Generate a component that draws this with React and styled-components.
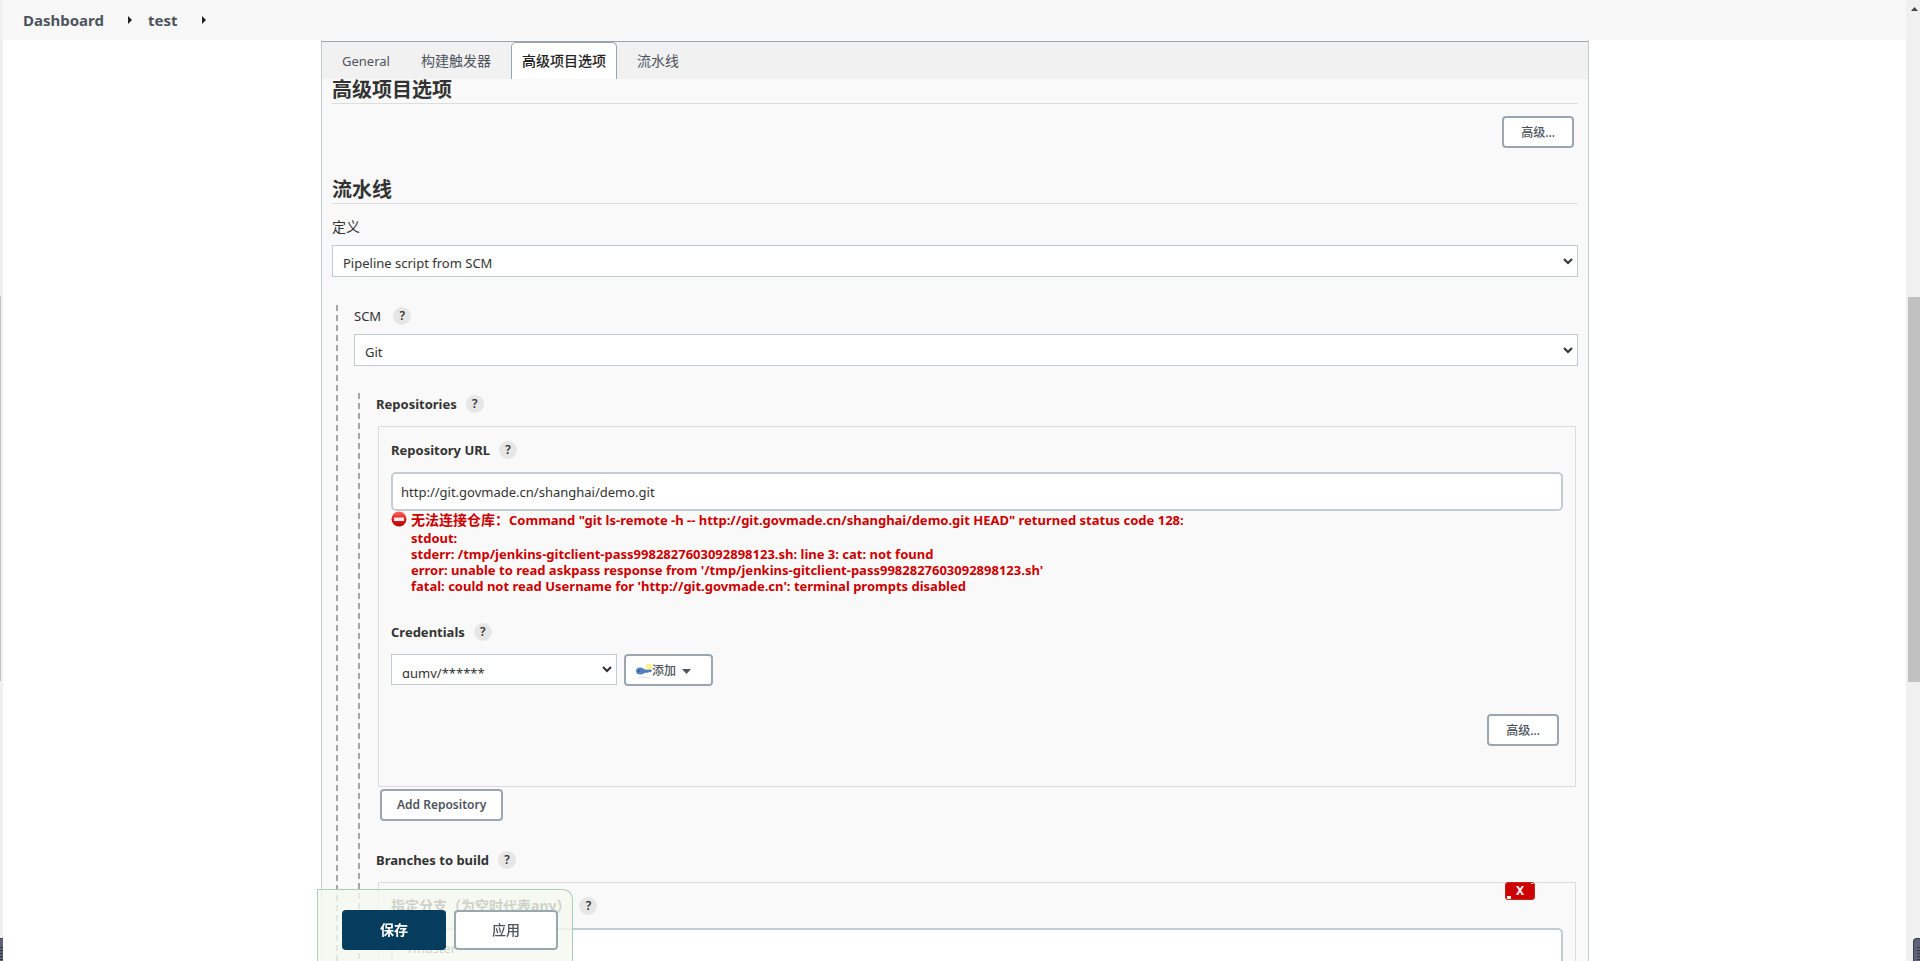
import React, { useState } from "react";
import styled, { createGlobalStyle } from "styled-components";

const GlobalStyle = createGlobalStyle`
  * { box-sizing: border-box; }

  body {
    margin: 0;
    background: #fff;
    color: #333;
    font-family: "Noto Sans", "Noto Sans CJK SC", sans-serif;
    font-size: 13px;
    line-height: 20px;
    overflow: hidden;
  }

  button, input, select { font: inherit; color: inherit; margin: 0; }
`;

// --- PAGE FRAME ---
const Page = styled.div`
  height: 100vh;
  display: flex;
  overflow: hidden;
`;

const LeftEdge = styled.div`
  flex: none;
  width: 3px;
  display: flex;
  flex-direction: column;
  background: #f0f0f0;
`;

const LeftThumb = styled.div`
  width: 1px;
  margin-top: calc(30vh + 8px);
  height: 40vh;
  background: #c1c1c1;
`;

const Corner = styled.div`
  margin-top: auto;
  align-self: flex-end;
  width: ${(props) => props.$width};
  height: 23px;
  background:
    repeating-linear-gradient(#5f6377 0 2px, #343849 2px 3px) right 6px / 3px 100% no-repeat,
    #5f6377;
  border: 1px solid #3a3d4c;
  border-width: 1px 0 0 ${(props) => (props.$rounded ? "1px" : "0")};
  border-radius: ${(props) => (props.$rounded ? "4px 0 0 0" : "0")};
`;

const Scrollbar = styled.div`
  flex: none;
  width: 14px;
  display: flex;
  flex-direction: column;
  background: #f0f0f0;

  svg { display: block; margin: 7px 0 0 5px; }
`;

const Thumb = styled.div`
  margin: calc(30vh - 2px) 0 0 2px;
  height: 40vh;
  background: #c1c1c1;
`;

const Main = styled.div`
  flex: 1;
  min-width: 0;
  height: 100vh;
  display: flex;
  flex-direction: column;
  overflow: hidden;
`;

const Breadcrumbs = styled.nav`
  flex: none;
  height: 40px;
  display: flex;
  align-items: center;
  padding-left: 20px;
  background: #f8f8f8;
  font-size: 15px;
  font-weight: 700;

  a { color: #4d545d; text-decoration: none; }
  svg { margin: 0 16px 0 24px; }
`;

// --- CONFIG PANEL ---
const Panel = styled.main`
  flex: 1;
  min-height: 0;
  margin: 0 317px 0 318px;
  background: #f9f9f9;
  border: solid #c0cace;
  border-width: 0 1px;
  overflow: hidden;

  @media (max-width: 1400px) { margin: 0 16px; }
`;

const TabBar = styled.div`
  height: 38px;
  margin-top: 1px;
  display: flex;
  gap: 9px;
  padding-left: 9px;
  background: #f1f1f1;
  border-top: 1px solid #98a4ae;
`;

const Tab = styled.button`
  padding: 0 10px;
  border: 1px solid ${(props) => (props.$active ? "#98a4ae" : "transparent")};
  border-bottom: 0;
  border-radius: 5px 5px 0 0;
  background: ${(props) => (props.$active ? "#fff" : "transparent")};
  color: ${(props) => (props.$active ? "#222" : "#4d545d")};
  font-size: ${(props) => (props.$latin ? "13px" : "14px")};
  font-weight: ${(props) => (props.$active ? 500 : 400)};
  cursor: pointer;
`;

const Form = styled.form`
  padding: 0 10px;
`;

const SectionTitle = styled.h2`
  margin: 0;
  height: 25px;
  border-bottom: 1px solid #ddd;
  font-size: 20px;
  line-height: 22px;
  font-weight: 700;
`;

const AdvancedRow = styled.div`
  display: flex;
  justify-content: flex-end;
  padding: ${(props) => (props.$nested ? "28px 4px 40px" : "12px 4px 31px")};
`;

const SmallButton = styled.button`
  height: 32px;
  display: inline-flex;
  align-items: center;
  gap: 6px;
  padding: ${(props) => (props.$icon ? "2px 20px 0 10px" : props.$bold ? "0 15px" : "2px 17px 0")};
  border: 2px solid #9aa7b1;
  border-radius: 4px;
  background: #fff;
  color: #4d545d;
  font-size: 12px;
  font-weight: ${(props) => (props.$bold ? 600 : 500)};
  cursor: pointer;

  span { display: inline-flex; align-items: center; }
`;

const LabelRow = styled.div`
  display: flex;
  align-items: center;
  gap: ${(props) => (props.$wide ? "12px" : "9px")};
  height: 22px;
  font-size: ${(props) => (props.$cjk ? "14px" : "13px")};
  font-weight: ${(props) => (props.$bold ? 700 : 400)};
`;

const Help = styled.a`
  width: 18px;
  height: 18px;
  border-radius: 50%;
  background: #e6e6e6;
  color: #333;
  font-size: 12px;
  line-height: 18px;
  font-weight: 600;
  text-align: center;
  text-decoration: none;
`;

const SelectWrap = styled.div`
  display: grid;
  align-items: center;
  width: ${(props) => (props.$small ? "226px" : "100%")};

  > * { grid-area: 1 / 1; }
  > svg { justify-self: end; margin-right: 5px; pointer-events: none; }
`;

const Select = styled.select`
  appearance: none;
  width: 100%;
  height: ${(props) => (props.$clipped ? "31px" : "32px")};
  padding: ${(props) => (props.$clipped ? "8px 10px 6px" : "4px 10px 0")};
  border: 1px solid #c0cace;
  border-radius: 0;
  background: #fff;
`;

const TextInput = styled.input`
  display: block;
  width: 100%;
  height: 39px;
  padding: 0 8px;
  border: 2px solid #c3cdd1;
  border-radius: 5px;
  background: #fff;
`;

const Nested = styled.div`
  padding-left: 18px;
  margin-left: 4px;
  background: repeating-linear-gradient(#a6a6a6 0 6px, transparent 6px 10px) left top / 2px 100% no-repeat;
`;

const Field = styled.div`
  margin-top: ${(props) => props.$top};
`;

const Repeatable = styled.section`
  position: relative;
  margin: 11px 2px 0;
  padding: 12px 12px 0;
  border: 1px solid #ddd;
`;

const ErrorBox = styled.div`
  display: flex;
  gap: 4px;
  color: #c00;
  font-weight: 700;
  line-height: 16px;

  svg { flex: none; }
  pre { margin: 0; font: inherit; white-space: pre-wrap; }
`;

const ErrorHeadline = styled.div`
  min-height: 19px;
  line-height: 18px;

  span { font-size: 14px; }
`;

const Row = styled.div`
  display: flex;
  align-items: flex-start;
  gap: 7px;
  padding-left: ${(props) => (props.$inset ? "4px" : "0")};
`;

const DeleteButton = styled.button`
  position: absolute;
  top: -1px;
  right: 40px;
  width: 30px;
  height: 18px;
  padding: 0;
  border: 1px solid #c4281c;
  border-radius: 3px;
  background:
    linear-gradient(#fff, #fff) 1px 13px / 4px 3px no-repeat,
    linear-gradient(#fff, #fff) 25px 0 / 3px 1px no-repeat,
    #c00;
  color: #fff;
  font-size: 12px;
  line-height: 16px;
  font-weight: 700;
  cursor: pointer;
`;

// --- STICKY FOOTER ---
const BottomBar = styled.div`
  position: fixed;
  left: 317px;
  bottom: 0;
  height: 72px;
  display: flex;
  gap: 8px;
  padding: 20px 14px 0 24px;
  border: 1px solid #a9cfb8;
  border-bottom: 0;
  border-radius: 0 10px 0 0;
  background: rgba(245, 249, 239, 0.8);

  @media (max-width: 1400px) { left: 15px; }
`;

const BarButton = styled.button`
  width: 104px;
  height: 40px;
  border: 2px solid ${(props) => (props.$primary ? "#063d5f" : "#9aa7b1")};
  border-radius: 4px;
  background: ${(props) => (props.$primary ? "#063d5f" : "#fff")};
  color: ${(props) => (props.$primary ? "#fff" : "#4d545d")};
  font-size: 14px;
  font-weight: ${(props) => (props.$primary ? 700 : 500)};
  cursor: pointer;
`;

// --- ICONS ---
const CrumbArrow = () => (
  <svg width="4" height="8" viewBox="0 0 4 8"><path d="M0 0l4 4-4 4z" fill="#222" /></svg>
);

const Chevron = () => (
  <svg width="10" height="7" viewBox="0 0 10 7">
    <path d="M1 1l4 4 4-4" fill="none" stroke="#333" strokeWidth="2" />
  </svg>
);

const Caret = () => (
  <svg width="9" height="5" viewBox="0 0 9 5"><path d="M0 0h9L4.500 5z" fill="#4d545d" /></svg>
);

const ErrorIcon = () => (
  <svg width="16" height="16" viewBox="0 0 16 16">
    <defs>
      <linearGradient id="stop" x1="0" y1="0" x2="0" y2="1">
        <stop offset="0" stopColor="#ff6a60" />
        <stop offset="0.5" stopColor="#e02020" />
        <stop offset="1" stopColor="#b80000" />
      </linearGradient>
    </defs>
    <circle cx="8" cy="8" r="7.5" fill="url(#stop)" />
    <rect x="3" y="6.5" width="10" height="3.5" rx="0.5" fill="#f4eeee" />
  </svg>
);

const KeyIcon = () => (
  <svg width="16" height="16" viewBox="0 0 16 16">
    <ellipse cx="8" cy="14.5" rx="6" ry="0.8" fill="#e4e4e4" />
    <path d="M6 6l5 .8 4-.4 1 1-1.200 1.800-1.600-.4-1.200 1.200-1.400-.6L7 10.500z" fill="#4a7ab8" />
    <ellipse cx="4.200" cy="8" rx="4.200" ry="3.600" fill="#5482bd" />
    <circle cx="2.800" cy="7.800" r="1" fill="#2e5488" />
    <circle cx="12.800" cy="3.400" r="2.700" fill="#fdf65a" />
    <circle cx="12.800" cy="3.400" r="1.100" fill="#fffde0" />
  </svg>
);

const HelpLink = ({ name }) => (
  <Help href="#help" aria-label={`Help for feature: ${name}`}>?</Help>
);

const TABS = ["General", "构建触发器", "高级项目选项", "流水线"];

const ERROR_TEXT = `stdout:
stderr: /tmp/jenkins-gitclient-pass9982827603092898123.sh: line 3: cat: not found
error: unable to read askpass response from '/tmp/jenkins-gitclient-pass9982827603092898123.sh'
fatal: could not read Username for 'http://git.govmade.cn': terminal prompts disabled`;

const App = () => {
  const [tab, setTab] = useState("高级项目选项");
  const [url, setUrl] = useState("http://git.govmade.cn/shanghai/demo.git");
  const [branch, setBranch] = useState("*/master");

  return (
    <Page>
      <GlobalStyle />
      <LeftEdge>
        <LeftThumb />
        <Corner $width="3px" />
      </LeftEdge>

      <Main>
        <Breadcrumbs>
          <a href="#dashboard">Dashboard</a>
          <CrumbArrow />
          <a href="#test">test</a>
          <CrumbArrow />
        </Breadcrumbs>

        <Panel>
          <TabBar>
            {TABS.map((name) => (
              <Tab
                key={name}
                type="button"
                $active={name === tab}
                $latin={name === "General"}
                onClick={() => setTab(name)}
              >
                {name}
              </Tab>
            ))}
          </TabBar>

          <Form onSubmit={(e) => e.preventDefault()}>
            <SectionTitle>高级项目选项</SectionTitle>
            <AdvancedRow>
              <SmallButton type="button">高级...</SmallButton>
            </AdvancedRow>

            <SectionTitle>流水线</SectionTitle>
            <Field $top="12px">
              <LabelRow $cjk><label htmlFor="definition">定义</label></LabelRow>
            </Field>
            <Field $top="7px">
              <SelectWrap>
                <Select id="definition"><option>Pipeline script from SCM</option></Select>
                <Chevron />
              </SelectWrap>
            </Field>

            <Field $top="28px">
              <Nested>
                <LabelRow $wide>
                  <label htmlFor="scm">SCM</label>
                  <HelpLink name="SCM" />
                </LabelRow>
                <Field $top="7px">
                  <SelectWrap>
                    <Select id="scm"><option>Git</option></Select>
                    <Chevron />
                  </SelectWrap>
                </Field>

                <Field $top="27px">
                  <Nested>
                    <LabelRow $bold>
                      Repositories
                      <HelpLink name="Repositories" />
                    </LabelRow>
                    <Repeatable>
                      <LabelRow $bold>
                        <label htmlFor="url">Repository URL</label>
                        <HelpLink name="Repository URL" />
                      </LabelRow>
                      <Field $top="11px">
                        <TextInput id="url" value={url} onChange={(e) => setUrl(e.target.value)} />
                      </Field>
                      <ErrorBox>
                        <ErrorIcon />
                        <div>
                          <ErrorHeadline>
                            <span>无法连接仓库：</span>
                            Command "git ls-remote -h -- http://git.govmade.cn/shanghai/demo.git HEAD" returned status code 128:
                          </ErrorHeadline>
                          <pre>{ERROR_TEXT}</pre>
                        </div>
                      </ErrorBox>

                      <Field $top="27px">
                        <LabelRow $bold>
                          <label htmlFor="credentials">Credentials</label>
                          <HelpLink name="Credentials" />
                        </LabelRow>
                      </Field>
                      <Field $top="11px">
                        <Row>
                          <SelectWrap $small>
                            <Select id="credentials" $clipped><option>qumy/******</option></Select>
                            <Chevron />
                          </SelectWrap>
                          <SmallButton type="button" $icon>
                            <span><KeyIcon />添加</span>
                            <Caret />
                          </SmallButton>
                        </Row>
                      </Field>
                      <AdvancedRow $nested>
                        <SmallButton type="button">高级...</SmallButton>
                      </AdvancedRow>
                    </Repeatable>
                    <Field $top="2px">
                      <Row $inset>
                        <SmallButton type="button" $bold>Add Repository</SmallButton>
                      </Row>
                    </Field>

                    <Field $top="28px">
                      <LabelRow $bold>
                        Branches to build
                        <HelpLink name="Branches to build" />
                      </LabelRow>
                    </Field>
                    <Repeatable>
                      <DeleteButton type="button" aria-label="X">X</DeleteButton>
                      <LabelRow $bold $cjk>
                        <label htmlFor="branch">指定分支（为空时代表any）</label>
                        <HelpLink name="Branch Specifier" />
                      </LabelRow>
                      <Field $top="11px">
                        <TextInput id="branch" value={branch} onChange={(e) => setBranch(e.target.value)} />
                      </Field>
                    </Repeatable>
                  </Nested>
                </Field>
              </Nested>
            </Field>
          </Form>
        </Panel>
      </Main>

      <Scrollbar>
        <svg width="7" height="4" viewBox="0 0 7 4"><path d="M0 4l3.500-4L7 4z" fill="#444" /></svg>
        <Thumb />
        <Corner $width="7px" $rounded />
      </Scrollbar>

      <BottomBar>
        <BarButton type="button" $primary>保存</BarButton>
        <BarButton type="button">应用</BarButton>
      </BottomBar>
    </Page>
  );
};

export default App;
